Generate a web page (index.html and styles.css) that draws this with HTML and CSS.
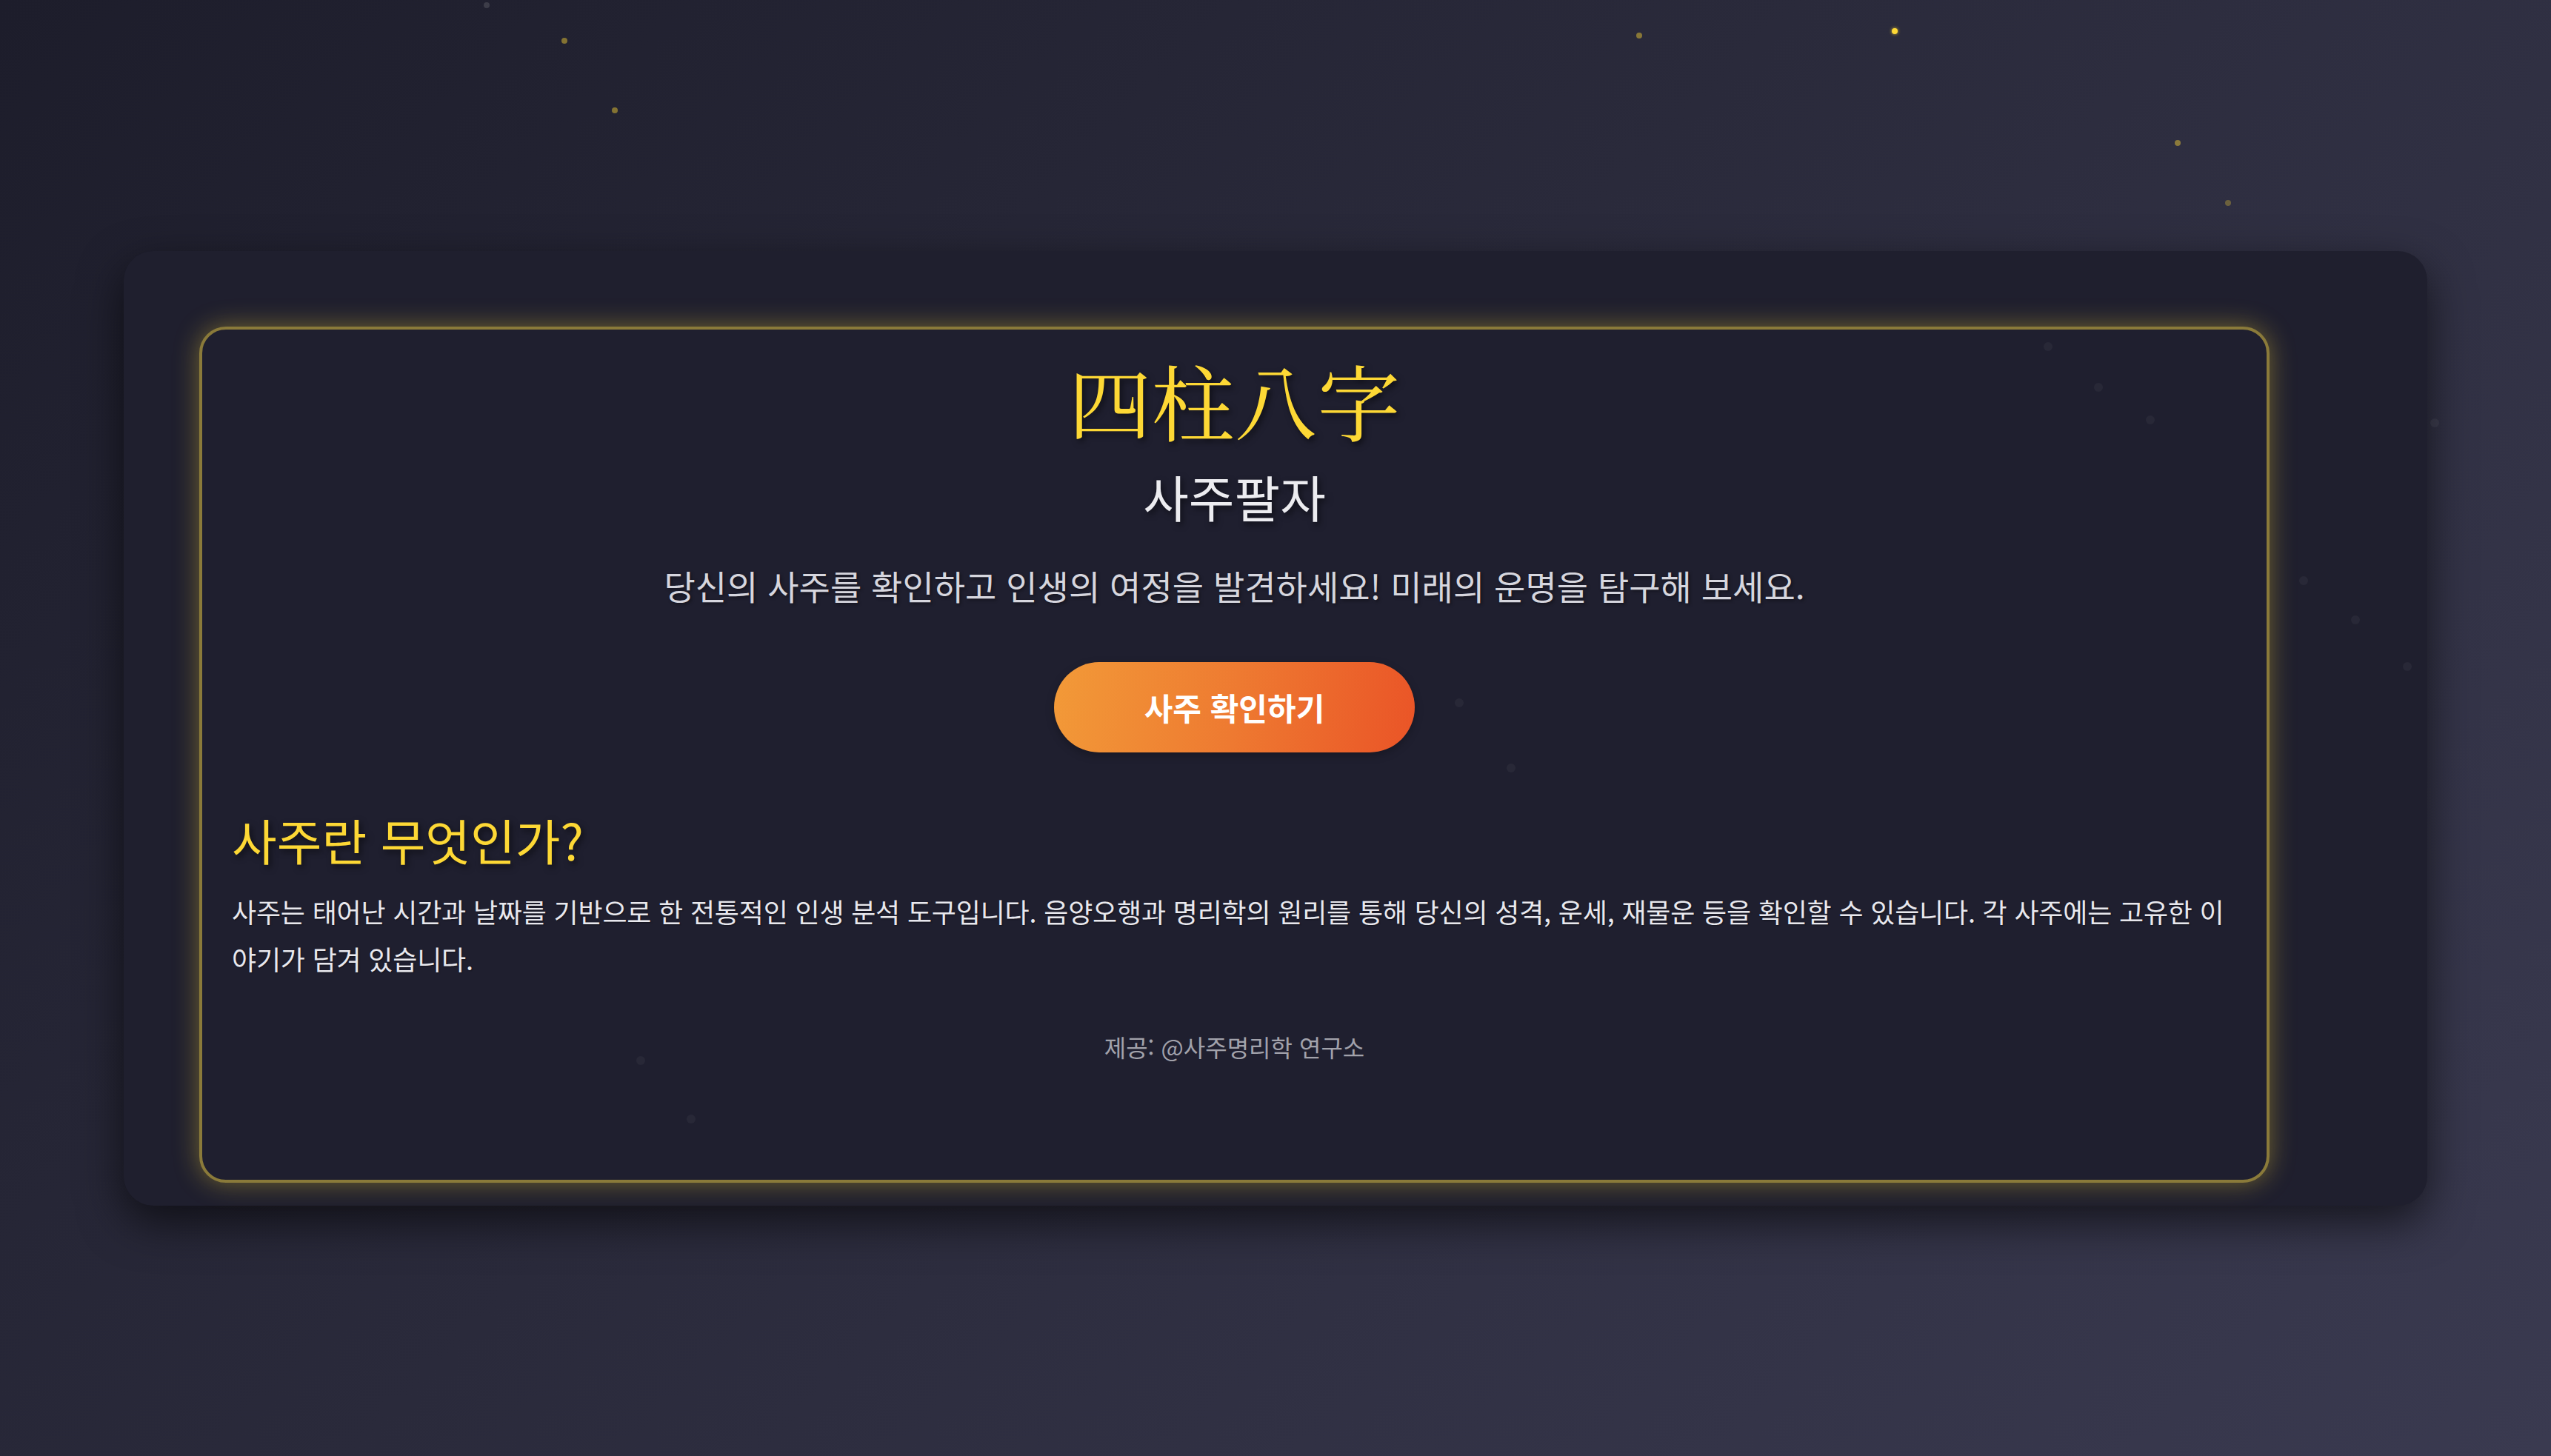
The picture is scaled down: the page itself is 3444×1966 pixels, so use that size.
FILE: index.html
```html
<!DOCTYPE html>
<html lang="ko">
<head>
<meta charset="utf-8">
<title>사주팔자</title>
<link rel="stylesheet" href="styles.css">
</head>
<body>
  <div class="sky" aria-hidden="true">
    <span class="star dim" style="left:653px;top:3px"></span>
    <span class="star mid" style="left:758px;top:51px"></span>
    <span class="star mid" style="left:826px;top:145px"></span>
    <span class="star mid" style="left:2209px;top:44px"></span>
    <span class="star bright" style="left:2554px;top:38px"></span>
    <span class="star mid" style="left:2936px;top:189px"></span>
    <span class="star low" style="left:3004px;top:270px"></span>
  </div>

  <main class="frame">
    <section class="card">
      <h1 class="title">四柱八字</h1>
      <h2 class="subtitle">사주팔자</h2>
      <p class="lead">당신의 사주를 확인하고 인생의 여정을 발견하세요! 미래의 운명을 탐구해 보세요.</p>
      <div class="actions">
        <button class="cta" type="button">사주 확인하기</button>
      </div>
      <h3 class="section-title">사주란 무엇인가?</h3>
      <p class="body-text">사주는 태어난 시간과 날짜를 기반으로 한 전통적인 인생 분석 도구입니다. 음양오행과 명리학의 원리를 통해 당신의 성격, 운세, 재물운 등을 확인할 수 있습니다. 각 사주에는 고유한 이야기가 담겨 있습니다.</p>
      <p class="credit">제공: @사주명리학 연구소</p>
    </section>
  </main>

  <div class="dust" aria-hidden="true">
    <span class="mote" style="left:2759px;top:462px"></span>
    <span class="mote" style="left:2827px;top:517px"></span>
    <span class="mote" style="left:2897px;top:561px"></span>
    <span class="mote" style="left:3281px;top:565px"></span>
    <span class="mote" style="left:3104px;top:778px"></span>
    <span class="mote" style="left:3174px;top:831px"></span>
    <span class="mote" style="left:3244px;top:894px"></span>
    <span class="mote" style="left:1964px;top:943px"></span>
    <span class="mote" style="left:2034px;top:1031px"></span>
    <span class="mote" style="left:859px;top:1426px"></span>
    <span class="mote" style="left:927px;top:1505px"></span>
  </div>
</body>
</html>
```

FILE: styles.css
```css
* { box-sizing: border-box; }

html, body { height: 100%; }

body {
  margin: 0;
  min-height: 100vh;
  display: flex;
  align-items: center;
  justify-content: center;
  position: relative;
  overflow: hidden;
  background: linear-gradient(135deg, #1d1d2b 0%, #2a2a3b 45%, #3a3a50 100%);
  font-family: "Noto Sans CJK KR", "Noto Sans", sans-serif;
  color: #e4e4ea;
}

.sky, .dust {
  position: absolute;
  inset: 0;
  pointer-events: none;
}

.sky { z-index: 0; }
.dust { z-index: 2; }

.star {
  position: absolute;
  width: 8px;
  height: 8px;
  border-radius: 50%;
  background: #fdd835;
}
.star.bright { opacity: 1; box-shadow: 0 0 4px rgba(253, 216, 53, 0.8); }
.star.mid { opacity: 0.45; }
.star.low { opacity: 0.3; }
.star.dim { opacity: 0.18; background: #bbb; }

.mote {
  position: absolute;
  width: 12px;
  height: 12px;
  border-radius: 50%;
  background: rgba(255, 255, 255, 0.045);
}

.frame {
  position: relative;
  z-index: 1;
  width: 3110px;
  padding: 102px 213px 31px 102px;
  background: #1f1f2e;
  border-radius: 40px;
  box-shadow: 0 22px 60px rgba(0, 0, 0, 0.6);
}

.card {
  display: flex;
  flex-direction: column;
  align-items: center;
  padding: 28px 40px 157px;
  border: 4px solid #8a7a3a;
  border-radius: 36px;
  background: #1f1f2f;
  box-shadow: 0 0 34px rgba(253, 216, 53, 0.38);
}

.title {
  margin: 0;
  font-family: "Noto Serif CJK SC", "Noto Serif CJK KR", "Noto Sans CJK SC", serif;
  font-weight: 400;
  font-size: 112px;
  line-height: 134px;
  color: #fdd835;
  text-shadow: 3px 4px 8px rgba(0, 0, 0, 0.55);
}

.subtitle {
  margin: 24px 0 0;
  font-weight: 400;
  font-size: 67px;
  line-height: 78px;
  color: #ececf0;
  font-feature-settings: "palt";
  text-shadow: 3px 4px 8px rgba(0, 0, 0, 0.55);
}

.lead {
  margin: 48px 0 0;
  font-size: 46px;
  line-height: 66px;
  color: #d6d6de;
  font-feature-settings: "palt";
  text-shadow: 2px 2px 4px rgba(0, 0, 0, 0.4);
}

.actions {
  margin-top: 71px;
  display: flex;
  justify-content: center;
}

.cta {
  width: 487px;
  height: 122px;
  border: 0;
  border-radius: 61px;
  background: linear-gradient(100deg, #f29a38 0%, #ee7a31 50%, #ea5427 100%);
  color: #ffffff;
  font-family: inherit;
  font-weight: 700;
  font-size: 42px;
  font-feature-settings: "palt";
  box-shadow: 0 4px 12px rgba(0, 0, 0, 0.25);
}

.section-title {
  align-self: stretch;
  margin: 79px 0 0;
  font-weight: 400;
  font-size: 66px;
  line-height: 76px;
  color: #fdd835;
  font-feature-settings: "palt";
  text-shadow: 3px 4px 8px rgba(0, 0, 0, 0.55);
}

.body-text {
  align-self: stretch;
  margin: 27px 0 0;
  font-size: 36px;
  line-height: 64px;
  letter-spacing: -0.2px;
  color: #e8e8ee;
  font-feature-settings: "palt";
  text-shadow: 1px 1px 2px rgba(0, 0, 0, 0.4);
}

.credit {
  margin: 64px 0 0;
  font-size: 32px;
  line-height: 46px;
  color: #a2a2ab;
  font-feature-settings: "palt";
}
```
